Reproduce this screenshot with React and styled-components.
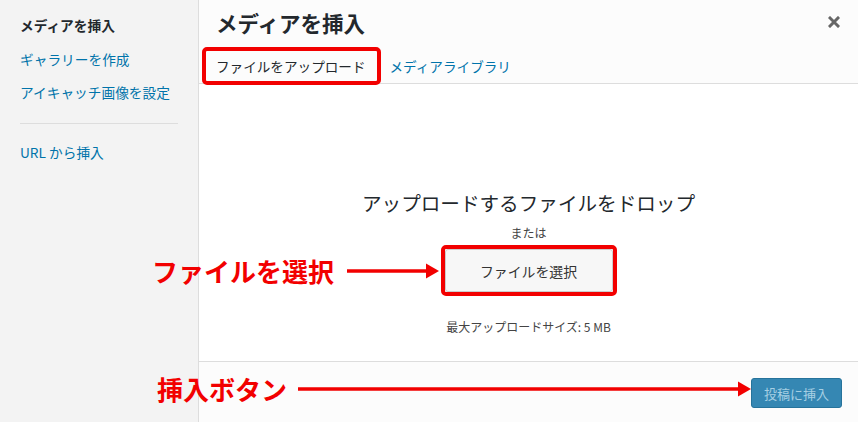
import styled, { createGlobalStyle } from "styled-components";

const GlobalStyle = createGlobalStyle`
  html, body {
    margin: 0;
    padding: 0;
    background: #fff;
  }
  body {
    font-family: "Noto Sans CJK JP", "Noto Sans", sans-serif;
    color: #23282d;
  }
`;

const Frame = styled.div`
  position: relative;
  display: flex;
  width: 858px;
  height: 422px;
  overflow: hidden;
`;

const Sidebar = styled.nav`
  width: 199px;
  flex-shrink: 0;
  background: #f3f3f3;
  border-right: 1px solid #dddddd;
  padding-top: 9px;
  box-sizing: border-box;
`;

const MenuItem = styled.div`
  height: 33.5px;
  line-height: 33.5px;
  padding-left: 20px;
  font-size: 13.7px;
  font-weight: ${(p) => (p.$active ? 700 : 400)};
  color: ${(p) => (p.$active ? "#23282d" : "#0073aa")};
  white-space: nowrap;
`;

const Separator = styled.div`
  height: 1px;
  margin: 13px 20px 12px 20px;
  background: #dddddd;
`;

const Main = styled.section`
  flex: 1;
  display: flex;
  flex-direction: column;
  min-width: 0;
`;

const Header = styled.header`
  height: 83px;
  border-bottom: 1px solid #dddddd;
  background: #fcfcfc;
  display: flex;
  flex-direction: column;
`;

const TitleRow = styled.div`
  display: flex;
  align-items: center;
  justify-content: space-between;
  height: 44px;
  padding: 0 18px 0 17px;
`;

const Title = styled.h1`
  margin: 0;
  font-size: 21.5px;
  font-weight: 700;
  color: #23282d;
`;

const Close = styled.button`
  border: 0;
  background: none;
  padding: 0;
  width: 12px;
  height: 12px;
  display: flex;
`;

const Tabs = styled.div`
  display: flex;
  margin-top: 6px;
  padding-left: 5px;
  height: 33px;
`;

const Marked = styled.div`
  position: relative;
  &::after {
    content: "";
    position: absolute;
    inset: ${(p) => p.$inset};
    border: 4px solid #f20000;
    border-radius: 5px;
    pointer-events: none;
  }
`;

const Tab = styled.div`
  height: 33px;
  line-height: 33px;
  padding: 0 12px;
  font-size: 13.6px;
  color: ${(p) => (p.$active ? "#23282d" : "#0073aa")};
  white-space: nowrap;
`;

const Content = styled.div`
  flex: 1;
  background: #ffffff;
  display: flex;
  flex-direction: column;
  align-items: center;
  padding-top: 105px;
  box-sizing: border-box;
`;

const DropText = styled.div`
  font-size: 19.6px;
  line-height: 28px;
  color: #23282d;
  white-space: nowrap;
`;

const Small = styled.div`
  font-size: 12px;
  line-height: 18px;
  color: #444;
  margin-top: ${(p) => p.$mt}px;
  white-space: nowrap;
`;

const SelectButton = styled.button`
  width: 168px;
  height: 43px;
  border: 1px solid #cccccc;
  border-radius: 3px;
  background: #f7f7f7;
  font-family: inherit;
  font-size: 13.9px;
  color: #333;
`;

const Footer = styled.footer`
  height: 61px;
  border-top: 1px solid #dddddd;
  background: #fcfcfc;
  display: flex;
  align-items: center;
  justify-content: flex-end;
  padding-right: 16px;
  box-sizing: border-box;
`;

const InsertButton = styled.button`
  width: 91px;
  height: 30px;
  margin-top: 2px;
  border: 1px solid #26739b;
  border-radius: 3px;
  background: #3587b3;
  color: #a6cfe3;
  font-family: inherit;
  font-size: 13px;
`;

const Note = styled.div`
  position: absolute;
  left: ${(p) => p.$x}px;
  top: ${(p) => p.$y}px;
  display: flex;
  align-items: center;
`;

const NoteText = styled.span`
  font-size: 26px;
  font-weight: 700;
  color: #f20000;
  line-height: 34px;
  white-space: nowrap;
`;

const Arrow = ({ length, gap }) => (
  <svg
    width={length}
    height="16"
    viewBox={`0 0 ${length} 16`}
    style={{ marginLeft: gap }}
  >
    <line x1="0" y1="8" x2={length - 12} y2="8" stroke="#f20000" strokeWidth="3.5" />
    <polygon points={`${length - 13},0.5 ${length},8 ${length - 13},15.5`} fill="#f20000" />
  </svg>
);

export default function App() {
  return (
    <>
      <GlobalStyle />
      <Frame>
        <Sidebar>
          <MenuItem $active>メディアを挿入</MenuItem>
          <MenuItem>ギャラリーを作成</MenuItem>
          <MenuItem>アイキャッチ画像を設定</MenuItem>
          <Separator />
          <MenuItem>URL から挿入</MenuItem>
        </Sidebar>
        <Main>
          <Header>
            <TitleRow>
              <Title>メディアを挿入</Title>
              <Close aria-label="close">
                <svg width="12" height="12" viewBox="0 0 12 12">
                  <path d="M2 2 L10 10 M10 2 L2 10" stroke="#666" strokeWidth="3" strokeLinecap="square" />
                </svg>
              </Close>
            </TitleRow>
            <Tabs>
              <Marked $inset="-3px -3px -2px -2px">
                <Tab $active>ファイルをアップロード</Tab>
              </Marked>
              <Tab>メディアライブラリ</Tab>
            </Tabs>
          </Header>
          <Content>
            <DropText>アップロードするファイルをドロップ</DropText>
            <Small $mt={7}>または</Small>
            <Marked $inset="-4px" style={{ marginTop: 7 }}>
              <SelectButton>ファイルを選択</SelectButton>
            </Marked>
            <Small $mt={26}>最大アップロードサイズ: 5 MB</Small>
          </Content>
          <Footer>
            <InsertButton>投稿に挿入</InsertButton>
          </Footer>
        </Main>
        <Note $x={152} $y={254}>
          <NoteText>ファイルを選択</NoteText>
          <Arrow length={92} gap={13} />
        </Note>
        <Note $x={157} $y={372}>
          <NoteText>挿入ボタン</NoteText>
          <Arrow length={453} gap={11} />
        </Note>
      </Frame>
    </>
  );
}
